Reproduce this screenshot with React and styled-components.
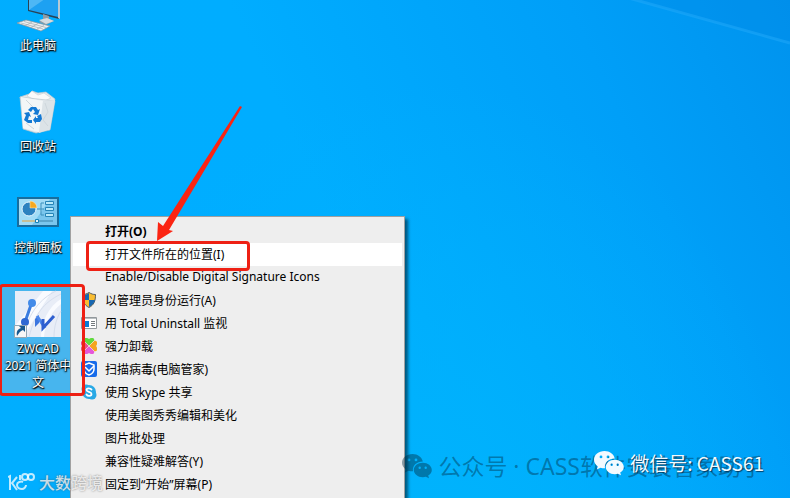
import React from "react";
import styled, { createGlobalStyle, css } from "styled-components";

const GlobalStyle = createGlobalStyle`
  body {
    margin: 0;
    font-family: "Noto Sans", "Noto Sans CJK SC", sans-serif;
    font-size: 12px;
  }

  button {
    font: inherit;
    border: 0;
    padding: 0;
    background: none;
  }
`;

const Desktop = styled.main`
  position: relative;
  height: 100vh;
  overflow: hidden;
  background:
    radial-gradient(ellipse at 55% 110%, #00b3fc 0%, rgba(0, 176, 252, 0) 60%),
    linear-gradient(65deg, #00aeff 0%, #00adff 45%, #009ff8 78%, #0093ee 100%);
`;

const LightBeam = styled.svg`
  position: absolute;
  top: 0;
  right: 0;
`;

const Shortcuts = styled.nav`
  position: relative;
  display: flex;
  flex-direction: column;
  width: 76px;
  margin-top: -17px;
`;

const ShortcutButton = styled.button`
  display: flex;
  flex-direction: column;
  align-items: center;
  gap: 2px;
  min-height: 101px;
  padding: 4px 2px;
  color: white;
  line-height: 17px;
  text-shadow: 0 1px 2px black, 1px 1px 1px black, 0 0 2px rgba(0, 0, 0, 0.6);

  ${({ $selected }) =>
    $selected &&
    css`
      min-height: 108px;
      background: #47b5ee;
      box-shadow: inset 0 0 0 1px #7cc9f0;
    `}
`;

const Menu = styled.ul`
  position: absolute;
  top: 216px;
  left: 70px;
  width: 335px;
  box-sizing: border-box;
  margin: 0;
  padding: 3px 2px 24px;
  list-style: none;
  background: #eeeeee;
  border: 1px solid #a0a0a0;
  box-shadow: 3px 3px 3px rgba(0, 0, 0, 0.5);
`;

const MenuButton = styled.button`
  display: flex;
  align-items: center;
  width: 100%;
  height: 23px;
  padding: 0 0 2px 8px;
  gap: 8px;
  color: black;
  text-align: left;
  white-space: nowrap;
  background: ${({ $active }) => ($active ? "white" : "transparent")};
  font-weight: ${({ $bold }) => ($bold ? 700 : 400)};
`;

const IconSlot = styled.span`
  display: flex;
  width: 16px;
  height: 16px;
`;

const Callout = styled.div`
  position: absolute;
  box-sizing: border-box;
  border: 3px solid #ee2014;
  border-radius: 4px;
  pointer-events: none;
`;

const ShortcutCallout = styled(Callout)`
  top: 284px;
  left: -1px;
  width: 86px;
  height: 112px;
`;

const MenuCallout = styled(Callout)`
  top: 241px;
  left: 86px;
  width: 164px;
  height: 30px;
`;

const Arrow = styled.svg`
  position: absolute;
  top: 100px;
  left: 150px;
  pointer-events: none;
`;

const Watermark = styled.div`
  position: absolute;
  display: flex;
  align-items: center;
  gap: 6px;
  white-space: nowrap;
  font-family: "Noto Sans CJK SC", sans-serif;
  pointer-events: none;
`;

const AccountMark = styled(Watermark)`
  right: 26px;
  bottom: 16px;
  color: rgba(0, 40, 60, 0.42);
  font-family: "Noto Sans", "Noto Sans CJK SC", sans-serif;
  font-size: 23px;
  line-height: 32px;
`;

const ContactMark = styled(Watermark)`
  right: 26px;
  bottom: 20px;
  color: #f2faff;
  font-size: 19px;
  line-height: 30px;
  text-shadow: 1px 1px 1px rgba(0, 40, 70, 0.8);
`;

const SiteMark = styled(Watermark)`
  left: 8px;
  bottom: 4px;
  gap: 3px;
  color: rgba(255, 255, 255, 0.75);
  font-size: 16px;
  font-weight: 500;
  line-height: 24px;
  text-shadow: 0 0 2px rgba(80, 80, 80, 0.7);
`;

const ComputerIcon = () => (
  <svg width="48" height="48" viewBox="0 0 48 48" aria-hidden="true">
    <path d="M14 1 45 7v25L14 24z" fill="#2a4254" />
    <path d="M15 2 44 8v22L15 23z" fill="#1da1f2" />
    <path d="M15 2 38 7 15 23z" fill="#63c0f7" opacity=".7" />
    <path d="M44 8l2 1v23l-2-1z" fill="#b7c9d4" />
    <path d="m29 27 6 2v3l5 2-8 4-7-3 4-3z" fill="#8f9ca6" />
    <path d="m25 33 8-2 7 3-8 3z" fill="#d6dce0" />
    <path d="M3 36 12 33l24 6-9 5z" fill="#eef1f3" stroke="#8d9499" strokeWidth=".7" />
    <path d="m7 36 22 6M10 34.500l22 6M11 39l7-4M17 40.500l7-4M23 42l7-3.500" stroke="#a4aaae" strokeWidth=".7" />
  </svg>
);

const RecycleIcon = () => (
  <svg width="48" height="48" viewBox="0 0 48 48" aria-hidden="true">
    <path d="m6 9 9-3 3-3 6 2 8-1 9 7-1 4H8z" fill="#e3e8eb" stroke="#c0c9ce" strokeWidth=".7" />
    <path d="m13 8 5-5 6 4 6-2 7 5-9 4-9-3z" fill="#fafafa" stroke="#cbd2d6" strokeWidth=".7" />
    <path d="m6 9 35 4-5 29-14 3-13-4z" fill="#e6ebee" stroke="#b9c4cb" strokeWidth=".7" />
    <path d="m7 9 22 4-4 31-16-4z" fill="#f3f6f7" />
    <path d="m29 13 12-1-5 29-11 4z" fill="#dce3e7" />
    <path d="m31 15 3 9-5 8 5 6M12 12l7 7M12 35l8 6" fill="none" stroke="#ced7dc" />
    <g fill="#1479d3">
      <path d="m14 22 3-3h5l2 3 2-1-2 6-5-1 2-2-2-3-2 3z" />
      <path d="m10 25 5-1 2 5-2-1-1 4h4v3h-4l-4-3 2-5z" />
      <path d="m23 28 4-2 1 5-2 3h-4v2l-3-4 3-4v2h2z" />
    </g>
  </svg>
);

const ControlPanelIcon = () => (
  <svg width="48" height="48" viewBox="0 0 48 48" aria-hidden="true">
    <path d="M3 8h42v30H3z" fill="#186d9d" />
    <path d="M5 10h38v26H5z" fill="#7ac6ed" />
    <path d="M5 10h31L18 36H5z" fill="#a2dcf6" />
    <circle cx="15" cy="20" r="7" fill="#2d82c0" stroke="#e4f6ff" />
    <path d="M16 19v-7a7 7 0 0 1 7 7z" fill="#f7a921" stroke="#fff3d0" strokeWidth=".5" />
    <path d="M23 20h4v-6h3M27 20h3M27 20v6h3" fill="none" stroke="#3b8fbc" />
    <g fill="#b9eafa" stroke="#2685b8">
      <path d="M31.500 12.500h8v3h-8zM31.500 18.500h8v3h-8zM31.500 24.500h8v3h-8z" />
    </g>
    <path d="M8 32h13" stroke="#e8a33b" />
    <path d="M24 32h15" stroke="#3a82a8" />
    <path d="M21.500 30.500h3v3h-3z" fill="#e4f6ff" stroke="#1480b5" />
  </svg>
);

const ZwcadIcon = () => (
  <svg width="48" height="48" viewBox="0 0 48 48" aria-hidden="true">
    <path d="M1 1h46v46H1z" fill="#e8edf7" />
    <path d="M1 36 29 1h9L9 47H1zM27 47C27 32 35 16 47 9v5C36 23 31 34 30 47z" fill="#f9fbff" />
    <path d="M9 47C15 22 26 9 42 1M15 47C21 24 29 13 47 4M40 47c0-11 3-20 7-26" fill="none" stroke="#d6deed" />
    <path d="M18 12 11 32" stroke="#3b7de0" strokeWidth="3" />
    <circle cx="18" cy="13" r="4" fill="#438be9" />
    <circle cx="11" cy="32" r="4" fill="#2e68d3" />
    <path d="M21 37V29l4-4v8z" fill="#3a75df" />
    <path d="m23 26 8 12" stroke="#4b87ec" strokeWidth="3" />
    <path d="M29 29v9l11-12" fill="none" stroke="#2e5fd0" strokeWidth="3" />
    <path d="M.5 35.500h12v12H.5z" fill="#f7f7f7" stroke="#91a7b5" />
    <path d="M3 46c-1-5 1-7 4-8l-2-2h6v6l-2-2c-3 1-4 3-6 6z" fill="#17598f" />
  </svg>
);

const ShieldIcon = () => (
  <svg width="16" height="16" viewBox="0 0 16 16" aria-hidden="true">
    <path d="M8 .5C5.500 2 4 2.500 1.500 2.500 1.500 9 3 13 8 15.500 13 13 14.500 9 14.500 2.500 12 2.500 10.500 2 8 .5z" fill="#f9bd32" stroke="#575b5e" />
    <path d="M8 1v7H2C1.500 6 2 4 2 3c2 0 4-.5 6-2zM8 8h6c-.8 3-2.800 5.500-6 7z" fill="#1767b1" />
  </svg>
);

const WindowIcon = () => (
  <svg width="16" height="16" viewBox="0 0 16 16" aria-hidden="true">
    <path d="M.5 2.500h15v11H.5z" fill="white" stroke="#92989c" />
    <path d="M1 3h14v1H1z" fill="#b9bec1" />
    <path d="M3 6h5v6H3z" fill="#087bd5" />
    <path d="M10 6.500h4M10 8.500h4M10 10.500h4" stroke="#73797d" />
  </svg>
);

const CloverIcon = () => (
  <svg width="16" height="16" viewBox="0 0 16 16" aria-hidden="true">
    <path d="M8 8C4 5 2 3 3 1s4-1 5 0c1-1 4-2 5 0s-1 4-5 7z" fill="#61da3e" />
    <path d="M8 8c3-4 5-6 7-5s1 4 0 5c1 1 2 4 0 5s-4-1-7-5z" fill="#f5a51f" />
    <path d="M8 8c4 3 6 5 5 7s-4 1-5 0c-1 1-4 2-5 0s1-4 5-7z" fill="#e657d9" />
    <path d="M8 8c-3 4-5 6-7 5s-1-4 0-5C0 7-1 4 1 3s4 1 7 5z" fill="#ee4e8b" />
    <path d="m3 3 10 10M13 3 3 13" stroke="#eeeeee" strokeWidth=".7" />
  </svg>
);

const GuardIcon = () => (
  <svg width="16" height="16" viewBox="0 0 16 16" aria-hidden="true">
    <rect width="16" height="16" rx="2" fill="#176bea" />
    <path d="m8 2 5 2v4c0 3-2 5-5 6-3-1-5-3-5-6V4z" fill="none" stroke="white" strokeWidth="1.500" />
    <path d="m4 6 4 4 5-5" fill="none" stroke="white" strokeWidth="1.500" />
  </svg>
);

const SkypeIcon = () => (
  <svg width="16" height="16" viewBox="0 0 16 16" aria-hidden="true">
    <circle cx="5" cy="5" r="4.500" fill="#29a9e5" />
    <circle cx="11" cy="11" r="4.500" fill="#29a9e5" />
    <circle cx="8" cy="8" r="7" fill="#29a9e5" />
    <path d="M10.500 5.500C9.500 4 5.500 3.700 5.500 6s5 1.500 5 4-4 2.500-5 .5" fill="none" stroke="white" strokeWidth="1.800" strokeLinecap="round" />
  </svg>
);

const WechatIcon = ({ size }) => (
  <svg width={size} height={size} viewBox="0 0 30 30" fill="currentColor" aria-hidden="true">
    <path
      fillRule="evenodd"
      d="M10.500 3C4.700 3 0 6.900 0 11.700c0 2.700 1.500 5.100 3.800 6.700l-1 3.100 3.700-1.800c1.300.4 2.600.6 4.500.6-.9-5.300 3.500-9.700 9.800-9.700C20 6.300 15.700 3 10.500 3zM7 7.500a1.400 1.400 0 1 1 0 2.800 1.400 1.400 0 0 1 0-2.800zm7 0a1.400 1.400 0 1 1 0 2.800 1.400 1.400 0 0 1 0-2.800z"
    />
    <path
      fillRule="evenodd"
      d="M20.800 11.800c-5 0-9 3.200-9 7.200s4 7.200 9 7.200c1.100 0 2.100-.2 3.100-.5l3.100 1.600-.8-2.700c2.200-1.300 3.600-3.300 3.600-5.600 0-4-4-7.200-9-7.200zM17.700 15.500a1.200 1.200 0 1 1 0 2.400 1.200 1.200 0 0 1 0-2.400zm6 0a1.200 1.200 0 1 1 0 2.400 1.200 1.200 0 0 1 0-2.400z"
    />
  </svg>
);

const SiteLogo = () => (
  <svg width="28" height="20" viewBox="0 0 28 20" fill="none" stroke="currentColor" strokeWidth="2" aria-hidden="true">
    <path d="m0 5 2-1v14M9 5 4 11l5 7M15 10c-2-1-6 0-6 3s3 4 5 4 4-2 4-4" />
    <path d="M12 3v5" />
    <circle cx="17" cy="5" r="3" />
    <circle cx="23" cy="5" r="3" />
  </svg>
);

const shortcuts = [
  { label: "此电脑", icon: <ComputerIcon /> },
  { label: "回收站", icon: <RecycleIcon /> },
  { label: "控制面板", icon: <ControlPanelIcon /> },
  { label: "ZWCAD 2021 简体中文", icon: <ZwcadIcon />, selected: true },
];

const menuItems = [
  { label: "打开(O)", bold: true },
  { label: "打开文件所在的位置(I)", active: true },
  { label: "Enable/Disable Digital Signature Icons" },
  { label: "以管理员身份运行(A)", icon: <ShieldIcon /> },
  { label: "用 Total Uninstall 监视", icon: <WindowIcon /> },
  { label: "强力卸载", icon: <CloverIcon /> },
  { label: "扫描病毒(电脑管家)", icon: <GuardIcon /> },
  { label: "使用 Skype 共享", icon: <SkypeIcon /> },
  { label: "使用美图秀秀编辑和美化" },
  { label: "图片批处理" },
  { label: "兼容性疑难解答(Y)" },
  { label: "固定到“开始”屏幕(P)" },
];

const App = () => {
  return (
    <>
      <GlobalStyle />
      <Desktop>
        <LightBeam width="200" height="80" viewBox="0 0 200 80" aria-hidden="true">
          <path d="M35-3 200 43V0H35z" fill="#0087e4" opacity=".3" />
          <path d="M35-3 200 43" stroke="#22aafa" strokeWidth="3" opacity=".5" />
        </LightBeam>

        <Shortcuts>
          {shortcuts.map(({ label, icon, selected }) => (
            <ShortcutButton key={label} type="button" $selected={selected}>
              {icon}
              <span>{label}</span>
            </ShortcutButton>
          ))}
        </Shortcuts>

        <Menu>
          {menuItems.map(({ label, icon, bold, active }) => (
            <li key={label}>
              <MenuButton type="button" $bold={bold} $active={active}>
                <IconSlot>{icon}</IconSlot>
                {label}
              </MenuButton>
            </li>
          ))}
        </Menu>

        {/* Red annotations */}
        <ShortcutCallout />
        <MenuCallout />
        <Arrow width="100" height="150" viewBox="150 100 100 150" aria-hidden="true">
          <path d="M240 106 163 226 158 222 157 241 173 231 169 230 242 107z" fill="#fb2412" />
        </Arrow>

        <AccountMark>
          <WechatIcon size={30} />
          <span>公众号 · CASS软件安装管家助手</span>
        </AccountMark>
        <ContactMark>
          <WechatIcon size={30} />
          <span>微信号: CASS61</span>
        </ContactMark>
        <SiteMark>
          <SiteLogo />
          <span>大数跨境</span>
        </SiteMark>
      </Desktop>
    </>
  );
};

export default App;
